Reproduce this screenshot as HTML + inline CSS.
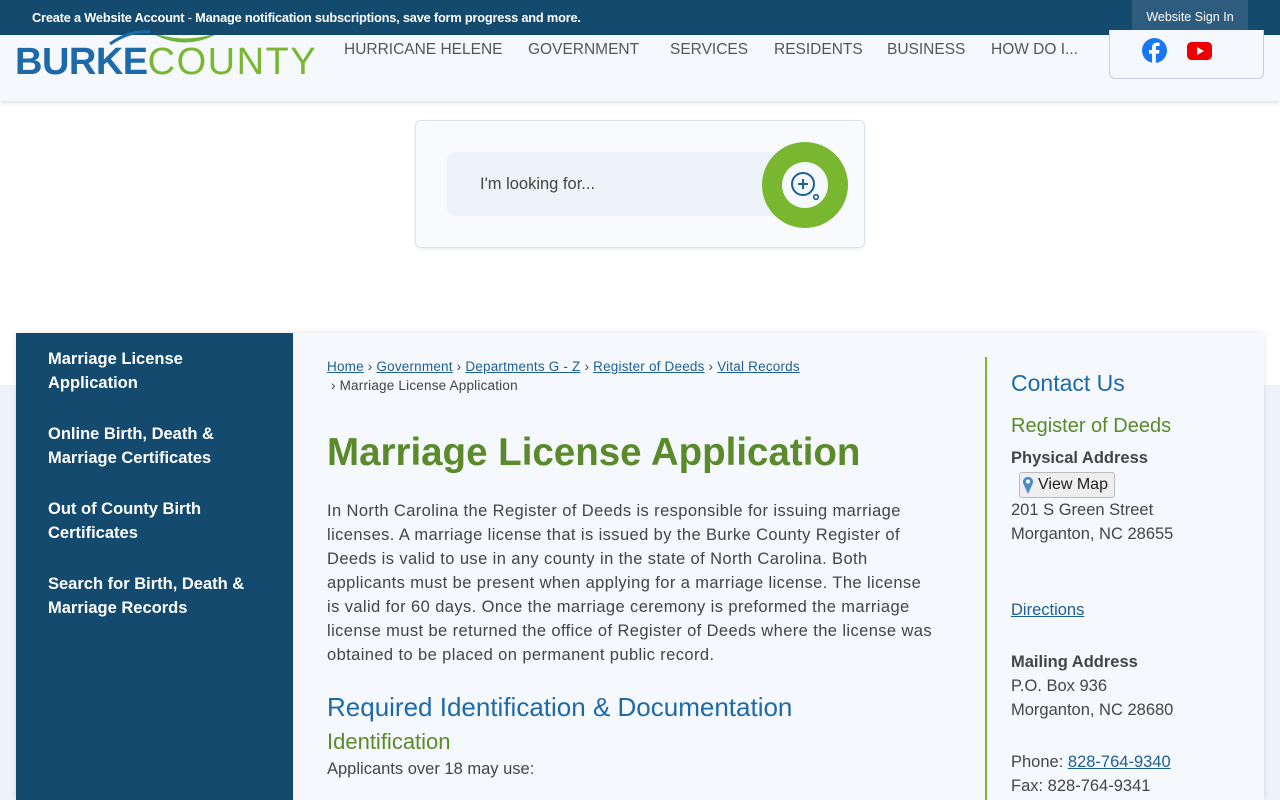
<!DOCTYPE html>
<html><head><meta charset="utf-8"><style>
*{margin:0;padding:0;box-sizing:border-box}
body{width:1280px;height:800px;overflow:hidden;background:#fff;font-family:"Liberation Sans",sans-serif;position:relative;color:#444}
.abs{position:absolute}
.top{left:0;top:0;width:1280px;height:35px;background:#134a6e;color:#fff;font-size:12.5px;}
.top .msg{position:absolute;left:32px;top:10px;font-weight:bold;font-size:12.8px;letter-spacing:-0.2px;white-space:nowrap}
.sign{position:absolute;left:1132px;top:0;width:116px;height:35px;background:#2d5c7f;font-size:12.5px;text-align:center;line-height:35px}
.hdr{left:0;top:35px;width:1280px;height:66px;background:#f5f8fd;box-shadow:0 2px 4px rgba(0,0,0,.12)}
.nav{top:41px;font-size:15.5px;color:#555;white-space:nowrap}
.band{left:0;top:385px;width:1280px;height:415px;background:#eef3f9}
.card{left:16px;top:333px;width:1248px;height:467px;background:#f5f8fd;box-shadow:0 0 6px rgba(0,0,0,.1)}
.side{left:16px;top:333px;width:277px;height:467px;background:#134a6e;color:#fff;font-size:16.5px;font-weight:bold;line-height:24px}
.side div{position:absolute;left:32px;width:220px}
a{color:#1e5f95}
.p{font-size:16.5px;line-height:24px;color:#444;white-space:nowrap}
</style></head><body>
<div class="abs top"><div class="msg">Create a Website Account <span style="font-weight:normal">-</span> Manage notification subscriptions, save form progress and more.</div><div class="sign">Website Sign In</div></div>
<div class="abs hdr"></div>
<svg class="abs" style="left:100px;top:30px" width="140" height="16"><path d="M10 14 Q30 0 50 2" stroke="#1e6aa8" stroke-width="3" fill="none"/><path d="M55 5 Q85 20 115 5 L110 5 Q85 12 60 5Z" fill="#6fb23a"/></svg>
<div class="abs" style="left:15px;top:38px;font-size:38px;line-height:48px;white-space:nowrap"><span style="color:#1e6aa8;font-weight:900;letter-spacing:-0.5px">BURKE</span><span style="color:#7ab730;font-weight:300;letter-spacing:1.5px">COUNTY</span></div>
<div class="abs nav" style="left:344px">HURRICANE HELENE</div>
<div class="abs nav" style="left:528px">GOVERNMENT</div>
<div class="abs nav" style="left:670px">SERVICES</div>
<div class="abs nav" style="left:774px">RESIDENTS</div>
<div class="abs nav" style="left:887px">BUSINESS</div>
<div class="abs nav" style="left:991px">HOW DO I...</div>
<div class="abs" style="left:1109px;top:30px;width:155px;height:49px;border:1px solid #ccd;border-top:none;border-radius:0 0 6px 6px;background:#f5f8fd"></div>
<svg class="abs" style="left:1142px;top:38px" width="25" height="25" viewBox="0 0 24 24"><circle cx="12" cy="12" r="12" fill="#1877f2"/><path d="M13.3 24V15h3l.5-3.5h-3.5V9.3c0-1 .3-1.7 1.8-1.7h1.8V4.5c-.3 0-1.4-.1-2.7-.1-2.7 0-4.5 1.6-4.5 4.6v2.5H6.7V15h3V24z" fill="#fff"/></svg>
<svg class="abs" style="left:1187px;top:42px" width="25" height="18" viewBox="0 0 25 18"><rect width="25" height="18" rx="4.5" fill="#e00"/><path d="M10 5v8l7-4z" fill="#fff"/></svg>
<div class="abs" style="left:415px;top:120px;width:450px;height:128px;border:1px solid #dde3ea;border-radius:6px;background:#f8fafd;box-shadow:0 1px 3px rgba(0,0,0,.08)"></div>
<div class="abs" style="left:447px;top:152px;width:340px;height:64px;background:#eef3fa;border-radius:8px"></div>
<div class="abs" style="left:480px;top:175px;font-size:16.5px;color:#444">I'm looking for...</div>
<div class="abs" style="left:762px;top:142px;width:86px;height:86px;border-radius:50%;background:#7ab730"></div>
<div class="abs" style="left:782px;top:162px;width:46px;height:46px;border-radius:50%;background:#f5f8fd"></div>
<svg class="abs" style="left:788px;top:170px" width="34" height="34" viewBox="0 0 34 34"><circle cx="15" cy="14" r="11" fill="none" stroke="#1e5f95" stroke-width="2"/><path d="M15 9v10M10 14h10" stroke="#1e5f95" stroke-width="2"/><circle cx="28" cy="27" r="2.3" fill="none" stroke="#1e5f95" stroke-width="1.6"/></svg>
<div class="abs band"></div>
<div class="abs card"></div>
<div class="abs side">
<div style="top:14px">Marriage License Application</div>
<div style="top:89px">Online Birth, Death &amp; Marriage Certificates</div>
<div style="top:164px">Out of County Birth Certificates</div>
<div style="top:239px">Search for Birth, Death &amp; Marriage Records</div>
</div>
<div class="abs" style="left:327px;top:357px;font-size:13.5px;line-height:19px;color:#444;letter-spacing:0.2px;white-space:nowrap"><a href="#">Home</a> › <a href="#">Government</a> › <a href="#">Departments G - Z</a> › <a href="#">Register of Deeds</a> › <a href="#">Vital Records</a><br>&nbsp;› Marriage License Application</div>
<div class="abs" style="left:327px;top:431px;font-size:38.5px;font-weight:bold;color:#5a8a2a">Marriage License Application</div>
<div class="abs p" style="left:327px;top:499px;letter-spacing:0.4px">In North Carolina the Register of Deeds is responsible for issuing marriage<br>licenses. A marriage license that is issued by the Burke County Register of<br>Deeds is valid to use in any county in the state of North Carolina. Both<br>applicants must be present when applying for a marriage license. The license<br>is valid for 60 days. Once the marriage ceremony is preformed the marriage<br>license must be returned the office of Register of Deeds where the license was<br>obtained to be placed on permanent public record.</div>
<div class="abs" style="left:327px;top:692px;font-size:26px;color:#1e6aa8">Required Identification &amp; Documentation</div>
<div class="abs" style="left:327px;top:729px;font-size:22px;color:#5a8a2a">Identification</div>
<div class="abs p" style="left:327px;top:757px">Applicants over 18 may use:</div>
<div class="abs" style="left:985px;top:357px;width:2px;height:443px;background:#7ab730"></div>
<div class="abs" style="left:1011px;top:370px;font-size:23px;color:#1e6aa8">Contact Us</div>
<div class="abs" style="left:1011px;top:415px;font-size:20px;color:#5a8a2a">Register of Deeds</div>
<div class="abs p" style="left:1011px;top:446px;font-weight:bold">Physical Address</div>
<div class="abs" style="left:1019px;top:472px;width:96px;height:26px;border:1px solid #bbb;border-radius:3px;background:#eee;font-size:16px;line-height:24px;padding-left:18px;color:#222">View Map</div>
<svg class="abs" style="left:1022px;top:476px" width="12" height="18" viewBox="0 0 12 18"><path d="M6 18 L1.5 8 A5 5 0 1 1 10.5 8Z" fill="#4a8bc9"/><circle cx="6" cy="5.5" r="2" fill="#fff"/></svg>
<div class="abs p" style="left:1011px;top:498px">201 S Green Street<br>Morganton, NC 28655</div>
<div class="abs p" style="left:1011px;top:598px"><a href="#">Directions</a></div>
<div class="abs p" style="left:1011px;top:650px"><b>Mailing Address</b><br>P.O. Box 936<br>Morganton, NC 28680</div>
<div class="abs p" style="left:1011px;top:750px">Phone: <a href="#">828-764-9340</a><br>Fax: 828-764-9341</div>
</body></html>
